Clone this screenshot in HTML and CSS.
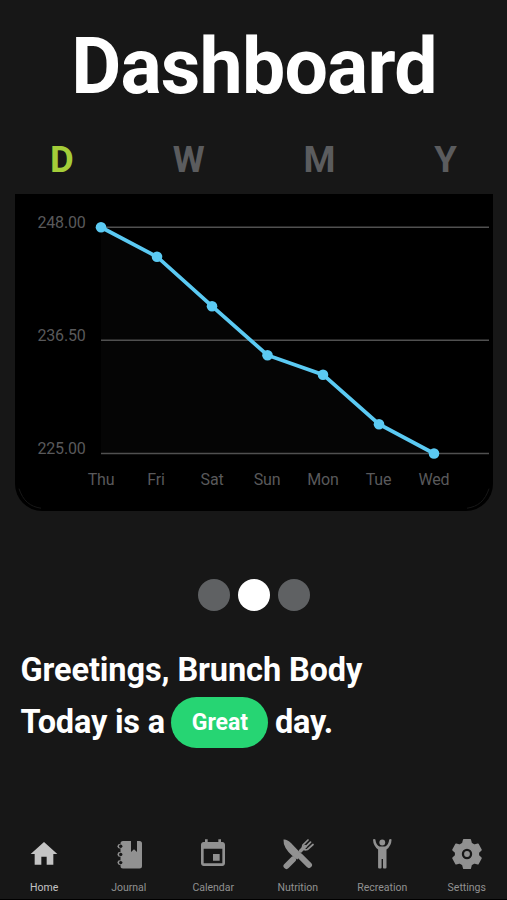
FILE: index.html
```
<!DOCTYPE html>
<html lang="en">

<head>
    <meta charset="UTF-8">
    <meta name="viewport" content="width=device-width, initial-scale=1.0">
    <title>Dashboard - Brunch Body</title>
    <link rel="stylesheet" href="styles.css">
</head>

<body>
    <h1 class="title">Dashboard</h1>

    <!-- Range tabs -->
    <div class="tabs">
        <button class="tab active">D</button>
        <button class="tab">W</button>
        <button class="tab">M</button>
        <button class="tab">Y</button>
    </div>

    <!-- Weight chart -->
    <div class="chart-card">
        <svg class="chart" width="478" height="317" viewBox="0 -0.700 478 317">
            <path class="corner" d="M4 294 C8 306 15 312 26 313.500 M474 294 C470 306 463 312 452 313.500" />
            <polygon class="area" points="86,33 142,62 197,111.500 252.500,160.500 308,180 364,229.500 419,259 86,259" />
            <g class="grid">
                <line x1="86" y1="32.500" x2="474" y2="32.500" />
                <line x1="86" y1="145.500" x2="474" y2="145.500" />
                <line x1="86" y1="258.800" x2="474" y2="258.800" />
            </g>
            <g class="y-labels">
                <text x="70.500" y="33">248.00</text>
                <text x="70.500" y="146">236.50</text>
                <text x="70.500" y="259">225.00</text>
            </g>
            <g class="x-labels">
                <text x="86" y="290">Thu</text>
                <text x="141" y="290">Fri</text>
                <text x="197" y="290">Sat</text>
                <text x="252" y="290">Sun</text>
                <text x="308" y="290">Mon</text>
                <text x="363.500" y="290">Tue</text>
                <text x="419" y="290">Wed</text>
            </g>
            <polyline class="line" points="86,32.500 142,62 197,111.500 252.500,160.500 308,180 364,229.500 419,258.800" />
            <g class="points">
                <circle cx="86" cy="32.500" r="5.300" />
                <circle cx="142" cy="62" r="5.300" />
                <circle cx="197" cy="111.500" r="5.300" />
                <circle cx="252.500" cy="160.500" r="5.300" />
                <circle cx="308" cy="180" r="5.300" />
                <circle cx="364" cy="229.500" r="5.300" />
                <circle cx="419" cy="258.800" r="5.300" />
            </g>
        </svg>
    </div>

    <!-- Slide dots -->
    <div class="dots">
        <span class="dot"></span>
        <span class="dot current"></span>
        <span class="dot"></span>
    </div>

    <div class="greeting">
        <p>Greetings, Brunch Body</p>
        <p class="mood-row">Today is a <button class="mood">Great</button> day.</p>
    </div>

    <!-- Bottom navigation -->
    <nav class="bottom-nav">
        <a href="#" class="nav-item active">
            <svg viewBox="0 0 24 24"><path d="M10 20v-6h4v6h5v-8h3L12 3 2 12h3v8z" /></svg>
            <span>Home</span>
        </a>
        <a href="#" class="nav-item">
            <svg viewBox="0 0 32 32">
                <path d="M10 3H18V14L21 11.300 24 14V3H26.500Q29 3 29 5.500V28Q29 30.500 26.500 30.500H10Q7.500 30.500 7.500 28V5.500Q7.500 3 10 3Z" />
                <g class="ring">
                    <circle cx="6.800" cy="8.300" r="2.300" />
                    <circle cx="6.800" cy="16.400" r="2.300" />
                    <circle cx="6.800" cy="24.600" r="2.300" />
                </g>
                <g class="hole">
                    <circle cx="7.700" cy="8.300" r="1.700" />
                    <circle cx="7.700" cy="16.400" r="1.700" />
                    <circle cx="7.700" cy="24.600" r="1.700" />
                </g>
            </svg>
            <span>Journal</span>
        </a>
        <a href="#" class="nav-item">
            <svg viewBox="0 0 24 24"><path d="M17 12h-5v5h5v-5zM16 1v2H8V1H6v2H5c-1.110 0-2 .9-2 2v14c0 1.100.9 2 2 2h14c1.100 0 2-.9 2-2V5c0-1.100-.9-2-2-2h-1V1h-2zm3 18H5V8h14v11z" /></svg>
            <span>Calendar</span>
        </a>
        <a href="#" class="nav-item">
            <svg viewBox="0 0 32 32">
                <path d="M1.500 1.500Q5 1 9 5L19 15.500 15.500 21.500Q13 20.500 10 17.500 1 9.500 1.500 1.500Z" />
                <g class="stroke">
                    <path class="handle" d="M18.500 18.500L27 27M11 21.500L4.500 28" />
                    <path class="neck" d="M18.500 13L23 8.500" />
                    <path class="tines" d="M26 2L21 7Q20 10 21 11Q22.500 12.500 25.500 11.500L31 6.500M28.500 4.200L23 9.700" />
                </g>
            </svg>
            <span>Nutrition</span>
        </a>
        <a href="#" class="nav-item">
            <svg viewBox="0 0 32 32">
                <circle cx="16.300" cy="4.500" r="2.900" />
                <path d="M7 1.500Q8.200 .5 9.400 1.500Q10 7 13.500 8.500H19.100Q22.600 7 23.200 1.500Q24.400 .5 25.600 1.500Q25.300 8 20.500 11.500V29.500Q20.500 30.500 19.500 30.500H17.800Q17 30.500 17 29.500V21H15.600V29.500Q15.600 30.500 14.800 30.500H13.100Q12.100 30.500 12.100 29.500V11.500Q7.300 8 7 1.500Z" />
            </svg>
            <span>Recreation</span>
        </a>
        <a href="#" class="nav-item">
            <svg viewBox="0 0 32 32">
                <path class="gear" fill-rule="evenodd" d="M12.800 1.800H19.200L20.200 5.500 23.200 7.200 26.900 6.200 30 11.800 27.300 14.300V17.700L30 20.200 26.900 25.800 23.200 24.800 20.200 26.500 19.200 30.200H12.800L11.800 26.500 8.800 24.800 5.100 25.800 2 20.200 4.700 17.700V14.300L2 11.800 5.100 6.200 8.800 7.200 11.800 5.500ZM16 10A6 6 0 1 0 16 22A6 6 0 1 0 16 10Z" />
                <circle cx="16" cy="16" r="2.900" />
            </svg>
            <span>Settings</span>
        </a>
    </nav>
</body>

</html>
```
FILE: styles.css
```
* {
    box-sizing: border-box;
    margin: 0;
    padding: 0;
    font-family: Roboto, Arial, sans-serif;
}

body {
    display: flex;
    flex-direction: column;
    height: 100vh;
    background-color: #171717;
    color: #ffffff;
    overflow: hidden;
}

button {
    border: none;
    background: none;
    cursor: pointer;
}

.title {
    margin-top: 22px;
    padding-left: 1px;
    font-size: 77px;
    line-height: 90px;
    letter-spacing: -0.8px;
    font-weight: bold;
    text-align: center;
}

/* Range tabs */

.tabs {
    display: flex;
    justify-content: space-between;
    margin-top: 26px;
    padding: 0 50px;
}

.tab {
    color: #5b5c5e;
    font-size: 36.5px;
    line-height: 43px;
    font-weight: bold;
}

.tab.active {
    color: #a4cd39;
}

/* Chart */

.chart-card {
    height: 317px;
    margin: 13px 14px 0 15px;
    background-color: #000000;
    border-radius: 0 0 27px 27px;
}

.chart {
    display: block;
}

.corner {
    fill: none;
    stroke: #171717;
    stroke-width: 1;
}

.area {
    fill: #050505;
}

.grid line {
    stroke: #505050;
    stroke-width: 1.6;
}

.y-labels text,
.x-labels text {
    fill: #59595b;
    font-size: 16px;
    letter-spacing: -0.2px;
}

.y-labels text {
    text-anchor: end;
}

.x-labels text {
    text-anchor: middle;
}

.line {
    fill: none;
    stroke: #5bcaf3;
    stroke-width: 3.8;
}

.points {
    fill: #5bcaf3;
}

/* Slide dots */

.dots {
    display: flex;
    justify-content: center;
    gap: 7.5px;
    margin-top: 67.5px;
    padding-left: 1px;
}

.dot {
    width: 32.5px;
    height: 32.5px;
    border-radius: 50%;
    background-color: #5f6163;
}

.dot.current {
    background-color: #ffffff;
}

/* Greeting */

.greeting {
    margin-top: 39px;
    padding-left: 20.5px;
    font-size: 32.5px;
    line-height: 40px;
    letter-spacing: -0.1px;
    font-weight: bold;
}

.mood-row {
    display: flex;
    align-items: center;
    gap: 6.5px;
    margin-top: 6.5px;
    letter-spacing: -0.2px;
}

.mood {
    width: 97px;
    height: 51px;
    padding-top: 1px;
    border-radius: 26px;
    background-color: #26d573;
    color: #ffffff;
    font-size: 23px;
    font-weight: bold;
}

/* Bottom navigation */

.bottom-nav {
    display: grid;
    grid-template-columns: repeat(6, 84.5px);
    justify-content: center;
    height: 62px;
    margin-top: auto;
    padding-left: 4px;
    border-bottom: 1px solid #000000;
}

.nav-item {
    display: flex;
    flex-direction: column;
    align-items: center;
    gap: 11px;
    color: #919191;
    font-size: 10.5px;
    line-height: 13px;
    text-decoration: none;
}

.nav-item.active {
    color: #c4c4c4;
}

.nav-item svg {
    width: 32px;
    height: 32px;
    fill: currentColor;
}

.hole {
    fill: #171717;
}

.stroke {
    fill: none;
    stroke: currentColor;
    stroke-linecap: round;
}

.handle {
    stroke-width: 6;
}

.neck {
    stroke-width: 3.5;
}

.tines {
    stroke-width: 1.7;
}

.gear {
    stroke: currentColor;
    stroke-width: 1.6;
    stroke-linejoin: round;
}
```
